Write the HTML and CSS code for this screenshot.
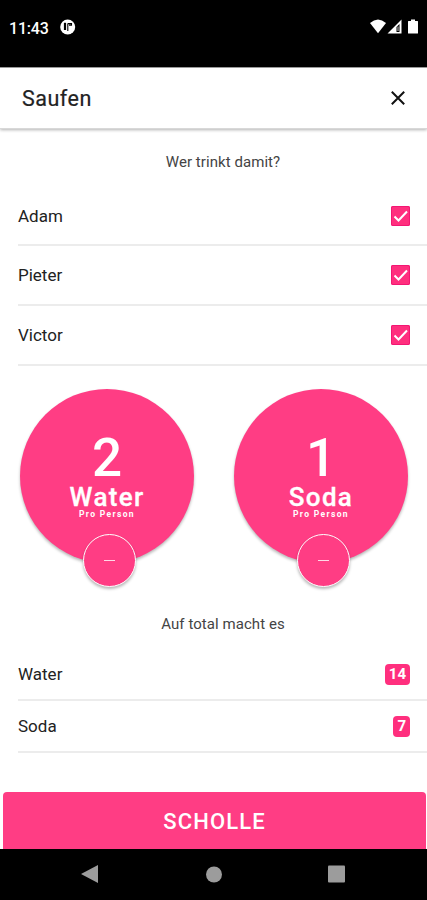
FILE: index.html
```html
<!DOCTYPE html>
<html lang="de">
<head>
<meta charset="utf-8">
<title>Saufen</title>
<link rel="stylesheet" href="styles.css">
</head>
<body>
<div class="status">
  <span class="clock">11:43</span>
  <svg class="app-icon" width="16" height="16" viewBox="0 0 16 16"><circle cx="7.700" cy="8" r="7.500" fill="#fff"/><path d="M5 3.800V11" fill="none" stroke="#000" stroke-width="2.200"/><path d="M7.800 12V4.400M7.800 4.600h3.700v1.500H9" fill="none" stroke="#000" stroke-width="1.100"/></svg>
  <svg class="signals" width="50" height="16" viewBox="0 0 50 16" fill="#fff"><path d="M0 4Q8-3 16 4L8 14.300Z"/><path fill-rule="evenodd" d="M17.500 14.500L31.500 .500V14.500ZM26.500 13h3V5l-3 3Z"/><path d="M28 7.500V12" stroke="#fff" stroke-width=".8"/><path d="M38.500 2h2.500V.5h4V2h2.500q.5 0 .5.500V14q0 .5-.5.500h-9q-.5 0-.5-.5V2.500q0-.5.500-.5Z"/></svg>
</div>
<header class="header">
  <h1>Saufen</h1>
  <svg width="14" height="14" viewBox="0 0 14 14"><path d="M.8.8l12.400 12.400M13.200.8L.8 13.200" stroke="#111" stroke-width="2"/></svg>
</header>
<main>
  <p class="caption">Wer trinkt damit?</p>
  <ul class="list people">
    <li><span>Adam</span><i class="check"><svg width="19" height="20" viewBox="0 0 19 20"><path d="M3.500 10.500l4 4L16 5.500"/></svg></i></li>
    <li><span>Pieter</span><i class="check"><svg width="19" height="20" viewBox="0 0 19 20"><path d="M3.500 10.500l4 4L16 5.500"/></svg></i></li>
    <li><span>Victor</span><i class="check"><svg width="19" height="20" viewBox="0 0 19 20"><path d="M3.500 10.500l4 4L16 5.500"/></svg></i></li>
  </ul>
  <section class="drinks">
    <div class="drink"><b class="count">2</b><span class="name">Water</span><span class="per">Pro Person</span><button class="minus"><i></i></button></div>
    <div class="drink"><b class="count">1</b><span class="name">Soda</span><span class="per">Pro Person</span><button class="minus"><i></i></button></div>
  </section>
  <p class="caption total">Auf total macht es</p>
  <ul class="list totals">
    <li><span>Water</span><b class="badge">14</b></li>
    <li><span>Soda</span><b class="badge">7</b></li>
  </ul>
</main>
<button class="submit">SCHOLLE</button>
<nav class="nav">
  <svg width="427" height="51" viewBox="0 0 427 51" fill="#9c9c9c"><path d="M81 25L98 16V34Z"/><circle cx="214" cy="25.500" r="8"/><rect x="328" y="16.500" width="17" height="17" rx="1"/></svg>
</nav>
</body>
</html>
```
FILE: styles.css
```css
* { box-sizing: border-box; }
body {
  margin: 0;
  width: 427px;
  height: 900px;
  display: flex;
  flex-direction: column;
  overflow: hidden;
  background: #fff;
  color: #222;
  font-family: Roboto, sans-serif;
}
button { font-family: inherit; border: 0; padding: 0; color: #fff; background: #ff3d84; }
.status {
  height: 67px;
  padding: 19px 7px 0 9px;
  display: flex;
  align-items: flex-start;
  background: #000;
  color: #fff;
  flex: none;
}
.clock { width: 51px; font-size: 16px; line-height: 20px; font-weight: 500; letter-spacing: -.2px; }
.signals { margin-left: auto; }
.header {
  height: 62px;
  padding: 0 22px;
  display: flex;
  align-items: center;
  justify-content: space-between;
  border-top: 1px solid #999;
  border-bottom: 1px solid #d8d8d8;
  box-shadow: 0 1px 3px rgba(0, 0, 0, .3);
  flex: none;
}
.header h1 { margin: 0; font-size: 21.500px; font-weight: 400; letter-spacing: .5px; -webkit-text-stroke: .2px #222; }
main { flex: none; height: 663px; }
.caption {
  margin: 0;
  height: 57px;
  padding: 21px 0 0 19px;
  text-align: center;
  font-size: 15px;
  line-height: 24px;
  letter-spacing: .06px;
  color: #444;
}
.list { list-style: none; margin: 0; padding: 0 0 0 18px; font-size: 17px; }
.list li {
  height: 60px;
  padding-right: 17px;
  display: flex;
  align-items: center;
  justify-content: space-between;
  border-bottom: 2px solid #ececec;
}
.people li:first-child { padding-top: 1px; }
.check { width: 19px; height: 20px; border-radius: 2px; background: #ff2f7e; box-shadow: inset 0 0 0 1px #f31673; }
.check svg { display: block; fill: none; stroke: #fff; stroke-width: 2; }
.drinks { display: flex; gap: 40px; height: 239px; padding: 23px 0 0 20px; }
.drink {
  position: relative;
  width: 174px;
  height: 174px;
  border-radius: 50%;
  background: #ff3d84;
  color: #fff;
  display: flex;
  flex-direction: column;
  align-items: center;
  padding-top: 42px;
  box-shadow: 0 2px 3px rgba(0, 0, 0, .28);
}
.count { font-size: 53px; line-height: 55px; font-weight: 500; }
.name { font-size: 26px; line-height: 23px; font-weight: 500; letter-spacing: 1.300px; -webkit-text-stroke: .3px #fff; }
.per { font-size: 8.500px; line-height: 11px; font-weight: 700; letter-spacing: 1.350px; }
.minus {
  position: absolute;
  left: 63px;
  top: 145px;
  width: 53px;
  height: 53px;
  border-radius: 50%;
  border: 1.500px solid #fff;
  display: flex;
  align-items: center;
  justify-content: center;
  box-shadow: 0 2px 3px rgba(0, 0, 0, .28);
}
.minus i { width: 11px; height: 1px; background: #ffd8e6; }
.total { height: 44px; padding-top: 7px; }
.totals li { height: 52px; }
.badge {
  height: 21px;
  padding: 0 4px;
  border-radius: 4px;
  background: #ff2f7e;
  color: #fff;
  font-size: 15px;
  line-height: 20px;
  font-weight: 700;
}
.submit {
  flex: none;
  height: 57px;
  margin: 0 1px 0 3px;
  padding-top: 1px;
  border-radius: 4px 4px 0 0;
  font-size: 22px;
  font-weight: 500;
  letter-spacing: 1.100px;
}
.nav { flex: none; height: 51px; background: #000; }
.nav svg { display: block; }
```
